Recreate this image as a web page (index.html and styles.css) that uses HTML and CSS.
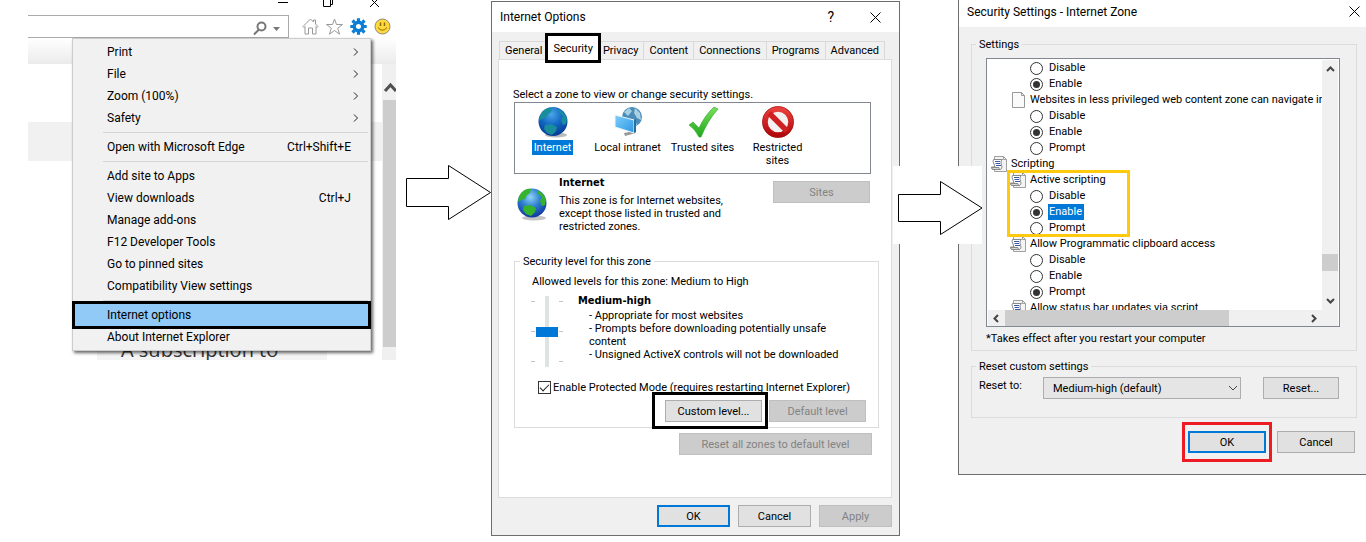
FILE: index.html
```html
<!DOCTYPE html>
<html lang="en">
<head>
<meta charset="utf-8">
<title>Enable Active Scripting</title>
<link rel="stylesheet" href="styles.css">
</head>
<body>
<svg class="defs" aria-hidden="true">
  <defs>
    <radialGradient id="sea" cx="45%" cy="30%" r="75%">
      <stop offset="0" stop-color="#8fd4f7"/><stop offset=".45" stop-color="#2f7fd0"/><stop offset="1" stop-color="#0b2f96"/>
    </radialGradient>
    <radialGradient id="seaBlue" cx="45%" cy="25%" r="75%">
      <stop offset="0" stop-color="#4aa5e8"/><stop offset=".5" stop-color="#1268c4"/><stop offset="1" stop-color="#063a94"/>
    </radialGradient>
    <linearGradient id="screen" x1="0" y1="0" x2="1" y2="1">
      <stop offset="0" stop-color="#7fd0fb"/><stop offset="1" stop-color="#2c96e4"/>
    </linearGradient>
    <linearGradient id="tick" x1="0" y1="0" x2="0" y2="1">
      <stop offset="0" stop-color="#7be05a"/><stop offset="1" stop-color="#1fa81b"/>
    </linearGradient>
    <linearGradient id="ban" x1="0" y1="0" x2="0" y2="1">
      <stop offset="0" stop-color="#e8403c"/><stop offset="1" stop-color="#b3080b"/>
    </linearGradient>
    <symbol id="land" viewBox="0 0 32 32">
      <path d="M5 6Q10 1 15 2L14 6 11 8 9 12 5 13 2 15Q2 10 5 6Z"/>
      <path d="M21 3Q28 6 30 13L29 18 26 19 24 14 26 10 22 7Z"/>
      <path d="M8 19L14 18 20 21 19 25 15 29 10 27 7 23Z"/>
    </symbol>
    <symbol id="script" viewBox="0 0 16 16">
      <path d="M3.500 .5h9l3 3v12h-12z" fill="#f4f4f4" stroke="#a0a0a0"/>
      <path d="M12.500 .5v3h3" fill="none" stroke="#a0a0a0"/>
      <path d="M2.500 3.500h9q-2 1-1.500 3.500t1 4q0 2-2 2.500h-7q-1.500-.5-1.500-2.500h3.500q-.5-2-1.500-4t0-3.500z" fill="#fff" stroke="#8a8a8a"/>
      <path d="M4 5.500h5M4.500 7.500h4.500M5 9.500h5" stroke="#3b56a8"/>
      <path d="M.5 11.500h7.500q0 1.500 1 2h-7q-1.500-.5-1.500-2z" fill="#d8d8d8" stroke="#8a8a8a"/>
    </symbol>
  </defs>
</svg>

<main class="steps">
  <section class="browser" aria-label="Browser">
    <div class="caption">
      <svg width="104" height="10" viewBox="0 0 104 10" fill="none" stroke="#000">
        <path d="M0 2.500h10M45.500-2v8.500h7v-8.500M52.500 4.500h2V-2M92-2l9 9M101-2l-9 9"/>
      </svg>
    </div>
    <div class="toolbar">
      <div class="address">
        <svg width="30" height="16" viewBox="0 0 30 16">
          <circle cx="8.500" cy="5.500" r="4" fill="none" stroke="#777" stroke-width="2"/>
          <path d="M6 8.500l-5 5" stroke="#777" stroke-width="2"/>
          <path d="M20 6h7l-3.500 4z" fill="#777"/>
        </svg>
      </div>
      <div class="tools">
        <svg width="17" height="17" viewBox="0 0 17 17" fill="#fff" stroke="#999"><path d="M1 8.500L8.500 1l3 3V2h2v4L16 8.500l-1 1-1-1v7.500h-3.500v-6h-4v6H3V8.500l-1 1z"/></svg>
        <svg width="17" height="17" viewBox="0 0 17 17" fill="#fff" stroke="#999"><path d="M8.500 1l2 5.500h6l-4.800 3.700 1.900 6-5.100-3.700-5.100 3.700 1.900-6L.5 6.500h6z"/></svg>
        <svg width="17" height="17" viewBox="-8.500 -8.500 17 17"><circle r="4.300" fill="none" stroke="#0c7cd5" stroke-width="3.400"/><path d="M0-5.500V-8.200M0 5.500V8.200M-5.500 0H-8.200M5.500 0H8.200M-4-4l-2-2M4-4l2-2M-4 4l-2 2M4 4l2 2" stroke="#0c7cd5" stroke-width="3.200"/></svg>
        <svg width="17" height="17" viewBox="0 0 17 17"><circle cx="8.500" cy="8.500" r="7.500" fill="#ffd93b" stroke="#8d8a78"/><path d="M6.500 4.500v3.500M10.500 4.500v3.500" stroke="#8a6a10" stroke-width="1.500"/><path d="M4 9.500q4.500 5.500 9 0" fill="none" stroke="#8a6a10"/></svg>
      </div>
    </div>
    <div class="view">
      <div class="page">
        <div class="page-top"></div>
        <div class="page-band"></div>
        <div class="page-card">A subscription to</div>
        <div class="page-scroll">
          <svg width="14" height="34" viewBox="0 0 14 34"><path d="M3 25l5.500-6 5.500 6" fill="none" stroke="#505050" stroke-width="3"/></svg>
          <div class="page-thumb"></div>
        </div>
      </div>
      <ul class="menu">
        <li><button>Print<svg class="more" viewBox="0 0 6 8"><path d="M1 .5L4.500 4 1 7.500"/></svg></button></li>
        <li><button>File<svg class="more" viewBox="0 0 6 8"><path d="M1 .5L4.500 4 1 7.500"/></svg></button></li>
        <li><button>Zoom (100%)<svg class="more" viewBox="0 0 6 8"><path d="M1 .5L4.500 4 1 7.500"/></svg></button></li>
        <li><button>Safety<svg class="more" viewBox="0 0 6 8"><path d="M1 .5L4.500 4 1 7.500"/></svg></button></li>
        <li class="rule"></li>
        <li><button>Open with Microsoft Edge<span class="keys">Ctrl+Shift+E</span></button></li>
        <li class="rule"></li>
        <li><button>Add site to Apps</button></li>
        <li><button>View downloads<span class="keys">Ctrl+J</span></button></li>
        <li><button>Manage add-ons</button></li>
        <li><button>F12 Developer Tools</button></li>
        <li><button>Go to pinned sites</button></li>
        <li><button>Compatibility View settings</button></li>
        <li class="rule"></li>
        <li><button class="chosen">Internet options</button></li>
        <li><button>About Internet Explorer</button></li>
      </ul>
    </div>
  </section>

  <svg class="arrow arrow-first" width="88" height="78" viewBox="0 0 88 78"><path d="M3.500 25.500h42v-13L87.500 39.500 45.500 66.500v-13h-42z" fill="#fff" stroke="#000"/></svg>

  <section class="dialog options" aria-label="Internet Options">
    <header class="title">
      <h2>Internet Options</h2>
      <button class="plain" aria-label="Help">?</button>
      <button class="plain" aria-label="Close"><svg width="11" height="11" viewBox="0 0 11 11"><path d="M.5 .5l10 10M10.500 .5l-10 10" stroke="#000"/></svg></button>
    </header>
    <div class="options-body">
      <nav class="tabs">
        <button>General</button><button class="active">Security</button><button>Privacy</button><button>Content</button><button>Connections</button><button>Programs</button><button>Advanced</button>
      </nav>
      <div class="panel">
        <p class="prompt">Select a zone to view or change security settings.</p>
        <div class="zones">
          <button class="zone picked">
            <svg width="32" height="32" viewBox="0 0 32 32"><ellipse cx="19" cy="29" rx="11" ry="2.500" fill="#bbb"/><circle cx="16" cy="15.500" r="14.500" fill="url(#seaBlue)"/><use href="#land" fill="#188d9b"/></svg>
            <span>Internet</span>
          </button>
          <button class="zone">
            <svg width="32" height="32" viewBox="0 0 32 32"><circle cx="20" cy="11" r="10" fill="#4b8db8"/><path d="M12 6l5-4 3 3-4 5zM23 2l5 5 1 7-4-2-3-5zM17 13l6 1 2 5-5 2z" fill="#a9d0e2"/><path d="M12 27l10-2 2 2-11 3z" fill="#999"/><path d="M3 9l19 5v13L3 21z" fill="url(#screen)" stroke="#eef6fb"/><path d="M22 14v13l2-1V13z" fill="#286f9d"/></svg>
            <span>Local intranet</span>
          </button>
          <button class="zone">
            <svg width="32" height="32" viewBox="0 0 32 32"><path d="M2 19l4-3 6 6Q18 9 27 1l4 2Q21 14 14 31h-2Q8 23 2 19z" fill="url(#tick)" stroke="#2aa32a" stroke-width=".6"/></svg>
            <span>Trusted sites</span>
          </button>
          <button class="zone">
            <svg width="32" height="32" viewBox="0 0 32 32"><circle cx="16" cy="16" r="13" fill="#f4f0f0" stroke="url(#ban)" stroke-width="5.500"/><path d="M7 7l18 18" stroke="#cf1f20" stroke-width="5.500"/><circle cx="16" cy="16" r="15.600" fill="none" stroke="#9b1012" stroke-width=".6"/></svg>
            <span>Restricted sites</span>
          </button>
        </div>
        <div class="about">
          <svg width="32" height="34" viewBox="0 0 32 34"><ellipse cx="18" cy="31" rx="12" ry="2.500" fill="#c4c4c4"/><circle cx="16" cy="16" r="14.500" fill="url(#sea)"/><use href="#land" width="32" height="32" fill="#35b32c"/></svg>
          <div class="about-text"><h3>Internet</h3><p>This zone is for Internet websites, except those listed in trusted and restricted zones.</p></div>
          <button class="btn" disabled>Sites</button>
        </div>
        <fieldset class="level">
          <legend>Security level for this zone</legend>
          <p class="allowed">Allowed levels for this zone: Medium to High</p>
          <div class="meter">
            <div class="ticks"><i></i><i></i><i></i></div>
            <input type="range" min="0" max="2" value="1" aria-label="Security level">
            <div class="ticks"><i></i><i></i><i></i></div>
            <div class="level-text">
              <h3>Medium-high</h3>
              <p>- Appropriate for most websites</p>
              <p>- Prompts before downloading potentially unsafe content</p>
              <p>- Unsigned ActiveX controls will not be downloaded</p>
            </div>
          </div>
          <label class="protect"><input type="checkbox" checked>Enable Protected Mode (requires restarting Internet Explorer)</label>
          <div class="level-buttons"><span class="mark black"><button class="btn">Custom level...</button></span><button class="btn" disabled>Default level</button></div>
        </fieldset>
        <button class="btn reset-all" disabled>Reset all zones to default level</button>
      </div>
      <footer class="actions"><button class="btn primary">OK</button><button class="btn">Cancel</button><button class="btn" disabled>Apply</button></footer>
    </div>
  </section>

  <svg class="arrow arrow-second" width="89" height="78" viewBox="0 0 89 78"><path d="M5.500 28.500h42v-13L89 42 47.500 68.500v-13h-42z" fill="#fff" stroke="#000"/></svg>

  <section class="dialog security" aria-label="Security Settings">
    <header class="title">
      <h2>Security Settings - Internet Zone</h2>
      <button class="plain" aria-label="Close"><svg width="11" height="11" viewBox="0 0 11 11"><path d="M.5 .5l10 10M10.500 .5l-10 10" stroke="#000"/></svg></button>
    </header>
    <div class="security-body">
      <fieldset class="settings">
        <legend>Settings</legend>
        <div class="list">
          <div class="tree">
            <label class="choice"><input type="radio" name="a">Disable</label>
            <label class="choice"><input type="radio" name="a" checked>Enable</label>
            <div class="item"><svg width="16" height="16" viewBox="0 0 16 16"><path d="M2.500 .5h9l3 3v12h-12z" fill="#fafafa" stroke="#999"/><path d="M11.500 .5v3h3" fill="none" stroke="#999"/></svg>Websites in less privileged web content zone can navigate in</div>
            <label class="choice"><input type="radio" name="b">Disable</label>
            <label class="choice"><input type="radio" name="b" checked>Enable</label>
            <label class="choice"><input type="radio" name="b">Prompt</label>
            <div class="item group"><svg width="16" height="16"><use href="#script"/></svg>Scripting</div>
            <div class="focus">
              <div class="item"><svg width="16" height="16"><use href="#script"/></svg>Active scripting</div>
              <label class="choice"><input type="radio" name="c">Disable</label>
              <label class="choice"><input type="radio" name="c" checked><span class="lit">Enable</span></label>
              <label class="choice"><input type="radio" name="c">Prompt</label>
            </div>
            <div class="item"><svg width="16" height="16"><use href="#script"/></svg>Allow Programmatic clipboard access</div>
            <label class="choice"><input type="radio" name="d">Disable</label>
            <label class="choice"><input type="radio" name="d">Enable</label>
            <label class="choice"><input type="radio" name="d" checked>Prompt</label>
            <div class="item"><svg width="16" height="16"><use href="#script"/></svg>Allow status bar updates via script</div>
          </div>
          <div class="vbar"><svg viewBox="0 0 9 6"><path d="M1 5l3.500-3.500L8 5"/></svg><span></span><svg viewBox="0 0 9 6"><path d="M1 1l3.500 3.500L8 1"/></svg></div>
          <div class="hbar"><svg viewBox="0 0 6 9"><path d="M5 1L1.500 4.500 5 8"/></svg><span></span><svg viewBox="0 0 6 9"><path d="M1 1l3.500 3.500L1 8"/></svg></div>
        </div>
        <p class="note">*Takes effect after you restart your computer</p>
      </fieldset>
      <fieldset class="custom">
        <legend>Reset custom settings</legend>
        <div class="custom-row">
          <label for="level">Reset to:</label>
          <div class="pick"><select id="level"><option>Medium-high (default)</option></select><svg viewBox="0 0 10 6"><path d="M1 1l4 4 4-4"/></svg></div>
          <button class="btn">Reset...</button>
        </div>
      </fieldset>
      <footer class="actions"><span class="mark red"><button class="btn primary">OK</button></span><button class="btn">Cancel</button></footer>
    </div>
  </section>
</main>
</body>
</html>
```
FILE: styles.css
```css
*, *::before, *::after { box-sizing: border-box; }
body { margin: 0; background: #fff; color: #000; font: 11px/13px Roboto, "Noto Sans", sans-serif; }
h2, h3, p, ul { margin: 0; padding: 0; }
button, select, input { font: inherit; color: inherit; margin: 0; }
button { padding: 0; }
svg { display: block; flex: none; }
.defs { position: absolute; width: 0; height: 0; }

.steps {
  display: grid;
  grid-template-columns: minmax(0, 368fr) minmax(0, 95fr) minmax(0, 409fr) minmax(0, 58fr) minmax(0, 408fr);
  align-items: start;
  padding-left: 28px;
  overflow: hidden;
}

/* Browser with its tools menu */
.browser { min-width: 0; }
.caption { display: flex; justify-content: flex-end; height: 15px; padding-right: 14px; }
.toolbar { display: flex; height: 23px; }
.address { flex: 1; display: flex; justify-content: flex-end; padding: 5px 5px 0 0; border: solid #aaa; border-width: 1px 1px 1px 0; }
.tools { display: flex; gap: 7px; padding: 3px 5px 0 13px; }
.view { display: grid; }
.page {
  grid-area: 1 / 1;
  display: grid;
  grid-template: 26px 58px 39px 1fr auto / 69px 230px 1fr 14px;
  color: #333;
  overflow: hidden;
}
.page-top { grid-area: 1 / 1 / 2 / 5; background: linear-gradient(#fff, #ebebeb); }
.page-band { grid-area: 3 / 1 / 4 / 4; background: #f1f1f1; }
.page-card { grid-area: 5 / 2; padding: 0 24px; background: #f4f4f4; font: 20px/20px "Open Sans", sans-serif; white-space: nowrap; }
.page-scroll { grid-area: 2 / 4 / 6 / 5; background: #f0f0f0; padding: 2px 0 13px; display: flex; flex-direction: column; }
.page-thumb { flex: 1; margin-left: 1px; background: #cdcdcd; }
.menu {
  grid-area: 1 / 1;
  z-index: 1;
  margin: 0 25px 9px 44px;
  padding: 2px;
  border: 1px solid #ccc;
  background: #f1f1f1;
  box-shadow: 2px 2px 3px #0009;
  list-style: none;
  font: 12px/22px Roboto, sans-serif;
}
.menu button { display: flex; align-items: center; width: 100%; height: 22px; padding: 0 17px 0 32px; border: 0; background: none; white-space: nowrap; }
.menu .keys { margin-left: auto; }
.menu .more { width: 6px; height: 8px; margin: 0 -8px 0 auto; fill: none; stroke: #222; }
.menu .rule { height: 1px; margin: 3px 0 3px 28px; background: #d5d5d5; }
.menu .chosen { background: #91c9f7; outline: 3px solid #000; }

.arrow { z-index: 2; background: #fff; }
.arrow-first { margin-top: 153px; justify-self: end; }
.arrow-second { margin: 166px 0 0 -7px; }

/* Dialogs */
.dialog { min-width: 0; border: 1px solid #6d6d6d; background: #f0f0f0; }
.title { display: flex; align-items: center; background: #fff; font: 12px/16px Roboto, sans-serif; }
.title h2 { flex: 1; font: inherit; }
.plain { border: 0; background: none; }
.btn { height: 22px; border: 1px solid #adadad; background: #e1e1e1; text-align: center; white-space: nowrap; }
.btn:disabled { border-color: #bfbfbf; background: #ccc; color: #838383; }
.btn.primary { border: 2px solid #0078d7; }
fieldset { min-width: 0; margin: 0; padding: 0; border: 1px solid #dcdcdc; }
legend { margin-left: 5px; padding: 0 3px; }
.actions { display: flex; justify-content: flex-end; }

.options { margin-top: 1px; }
.options .title { height: 30px; padding: 0 18px 0 8px; }
.options .title .plain:first-of-type { margin-right: 36px; font-size: 14px; }
.options-body { padding: 9px 7px 8px 6px; }
.tabs { display: flex; align-items: end; padding: 0 7px 0 1px; }
.tabs button { flex: 1 1 auto; height: 18px; padding: 0 2px; border: 1px solid #d9d9d9; border-width: 1px 1px 0 0; background: #f0f0f0; }
.tabs button:first-child { border-left-width: 1px; }
.tabs .active { z-index: 1; height: 24px; margin: -8px 0 -1px; border: 0; background: #fff; outline: 3px solid #000; }
.panel { display: flex; flex-direction: column; padding: 28px 12px 42px 15px; border: 1px solid #dcdcdc; background: #fff; }
.prompt { margin-left: -1px; }
.zones { display: flex; height: 72px; margin: 1px 8px 0 0; padding-top: 3px; border: 1px solid #828790; }
.zone { display: flex; flex-direction: column; align-items: center; width: 75px; padding: 0 8px; border: 0; background: none; }
.zone:nth-child(2), .zone:nth-child(3) { padding: 0; }
.zone span { margin-top: 2px; padding: 1px 2px; }
.zone.picked span { background: #0078d7; color: #fff; }
.about { display: flex; align-items: flex-start; margin-right: 9px; padding: 2px 0 0 2px; }
.about > svg { margin-top: 11px; }
.about-text { flex: 1; padding-left: 11px; }
.about-text p { max-width: 172px; margin-top: 5px; }
.about .btn { width: 97px; margin-top: 5px; }
h3 { font: bold 11px/13px "DejaVu Sans Condensed", sans-serif; }
.level { margin-top: 22px; padding-bottom: 5px; }
.allowed { margin: 7px 0 0 17px; }
.meter { display: flex; padding: 5px 0 0 16px; }
.ticks { display: flex; flex-direction: column; justify-content: space-between; width: 4px; height: 61px; margin-top: 8px; }
.ticks i { height: 1px; background: #c4c4c4; }
.meter input { appearance: none; writing-mode: vertical-lr; width: 22px; height: 71px; margin: 3px 1px 0; background: linear-gradient(#dfe3e3, #dfe3e3) center / 4px 100% no-repeat; }
.meter input::-webkit-slider-thumb { appearance: none; width: 22px; height: 10px; background: #0078d7; }
.level-text { flex: 1; padding-left: 15px; }
.level-text p { margin-left: 11px; max-width: 262px; }
.level-text h3 { margin: 1px 0 2px; }
.protect { display: flex; align-items: center; gap: 2px; margin: 14px 0 0 23px; white-space: nowrap; }
input[type="checkbox"] { appearance: none; width: 13px; height: 13px; border: 1px solid #333; display: grid; place-items: center; }
input[type="checkbox"]::before { content: ""; width: 5px; height: 9px; margin-top: -2px; border: solid #222; border-width: 0 1px 1px 0; transform: rotate(45deg); }
.level-buttons { display: flex; justify-content: flex-end; gap: 7px; margin: 6px 12px 0 0; }
.level-buttons .btn { width: 97px; }
.mark { position: relative; display: flex; }
.mark::after { content: ""; position: absolute; border: 3px solid; pointer-events: none; }
.black::after { inset: -8px -6px -7px -13px; color: #000; }
.red::after { inset: -9px -6px; color: #ed1c24; }
.reset-all { align-self: flex-end; width: 193px; margin: 5px 7px 0 0; }
.options .actions { gap: 8px; margin-top: 7px; }
.options .actions .btn { width: 73px; }

.security { border-width: 0 0 1px 1px; }
.security .title { height: 27px; padding: 0 6px 4px 8px; }
.security-body { padding: 11px 9px 21px 12px; }
.settings { padding: 7px 16px 5px 14px; }
.settings legend { margin-left: -10px; }
.list { display: grid; grid-template: 250px 16px / 1fr 16px; padding: 1px 1px 0; border: 1px solid #828790; background: #fff; }
.tree { overflow: hidden; white-space: nowrap; }
.choice, .item { display: flex; align-items: center; height: 16px; line-height: 16px; }
.choice { gap: 6px; padding-left: 42px; }
.item { gap: 4px; padding-left: 22px; }
.group { padding-left: 3px; }
input[type="radio"] { appearance: none; display: grid; place-items: center; width: 13px; height: 13px; border: 1px solid #333; border-radius: 50%; background: #fff; }
input[type="radio"]:checked::before { content: ""; width: 7px; height: 7px; border-radius: 50%; background: #333; }
.focus { position: relative; }
.focus::after { content: ""; position: absolute; inset: -2px auto -1px 19px; width: 123px; border: 3px solid #ffc90e; }
.lit { margin-left: -1px; padding: 0 2px 0 1px; background: #0078d7; color: #fff; }
.vbar, .hbar { display: flex; align-items: center; justify-content: space-between; background: #f0f0f0; }
.vbar { flex-direction: column; padding: 6px 0; }
.vbar span { width: 100%; height: 17px; margin: auto 0 27px; background: #cdcdcd; }
.hbar { grid-column: 1 / 3; padding: 0 21px 0 5px; }
.hbar span { width: 224px; height: 100%; margin: 0 auto 0 6px; background: #cdcdcd; }
.vbar svg, .hbar svg, .pick svg { fill: none; stroke: #444; }
.vbar svg { width: 9px; height: 6px; stroke-width: 2; }
.hbar svg { width: 6px; height: 9px; stroke-width: 2; }
.note { margin-top: 5px; }
.custom { margin-top: 9px; padding: 4px 17px 18px 7px; }
.custom legend { margin-left: -3px; }
.custom-row { display: flex; align-items: flex-start; }
.custom-row label { width: 64px; padding-top: 2px; }
.pick { display: grid; flex: 1; margin-right: 22px; }
.pick select { grid-area: 1 / 1; width: 100%; height: 22px; padding: 0 9px; appearance: none; border: 1px solid #adadad; border-radius: 0; background: #e5e5e5; }
.pick svg { grid-area: 1 / 1; place-self: center end; width: 10px; height: 6px; margin-right: 3px; pointer-events: none; }
.custom .btn { width: 76px; }
.security .actions { gap: 11px; margin: 13px 2px 0 0; }
.security .actions .btn { width: 78px; }
```
